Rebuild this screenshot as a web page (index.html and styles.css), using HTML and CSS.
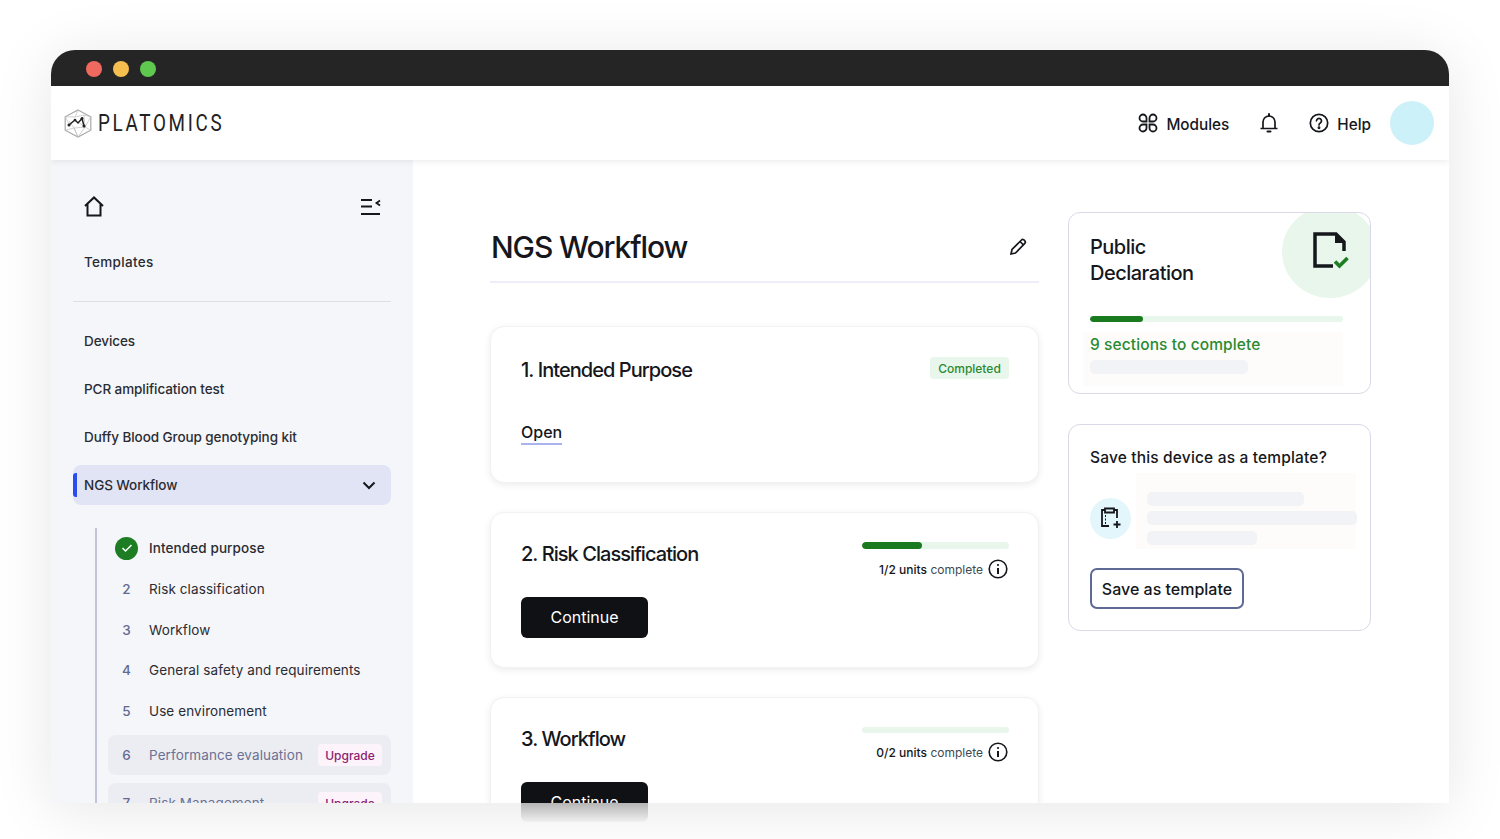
FILE: index.html
```html
<!DOCTYPE html>
<html lang="en">
<head>
<meta charset="utf-8">
<title>Platomics – NGS Workflow</title>
<link rel="stylesheet" href="styles.css">
</head>
<body>
<div class="window">
  <div class="titlebar"><i class="dot dot-red"></i><i class="dot dot-yellow"></i><i class="dot dot-green"></i></div>
  <header class="topbar">
    <div class="brand">
      <svg class="logo" width="28" height="29" viewBox="0 0 28 29" fill="none">
        <path d="M14 1 26.800 7.800V21.200L14 28 1.200 21.200V7.800Z" stroke="#a9a9a9" stroke-width="1.200"/>
        <path d="M14 1 11 8 1.200 7.800M11 8 20 6 26.800 7.800M20 6 21 18 26.800 21.200M21 18 14 28 10 19 1.200 21.200M10 19 21 18M5 12 10 19 14 28M14 13 21 18M26.800 7.800 21 18M1.200 7.800 5 15" stroke="#bdbdbd" stroke-width=".7"/>
        <path d="M5 16 11 11 14 14 18 9.500 20 17" stroke="#222" stroke-width="1.500"/>
        <circle cx="5" cy="16" r="1.500" fill="#222"/><circle cx="11" cy="11" r="1.300" fill="#222"/><circle cx="18" cy="9.500" r="1.500" fill="#222"/><circle cx="20" cy="17" r="1.500" fill="#222"/>
      </svg>
      <span class="brand-name">PLATOMICS</span>
    </div>
    <nav class="topnav">
      <a class="topnav-item">
        <svg width="20" height="20" viewBox="0 0 20 20" fill="none" stroke="#15171c" stroke-width="1.800"><path d="M8.500 8.500H5A3.500 3.500 0 1 1 8.500 5Z"/><path d="M11.500 8.500H15A3.500 3.500 0 1 0 11.500 5Z"/><path d="M8.500 11.500H5A3.500 3.500 0 1 0 8.500 15Z"/><path d="M11.500 11.500H15A3.500 3.500 0 1 1 11.500 15Z"/></svg>
        <span>Modules</span>
      </a>
      <svg class="bell" width="18" height="20" viewBox="0 0 18 20" fill="none" stroke="#15171c" stroke-width="1.700"><path d="M.5 15.500H17.500M3 15.500V9a6 6 0 0 1 12 0V15.500"/><path d="M9 3V1M7.500 18.500H10.500" stroke-linecap="round" stroke-width="2"/></svg>
      <a class="topnav-item help">
        <svg width="20" height="20" viewBox="0 0 20 20" fill="none" stroke="#15171c" stroke-width="1.700"><circle cx="10" cy="10" r="8.700"/><path d="M7.500 7.800A2.500 2.500 0 1 1 11.300 10C10.400 10.500 10 11 10 12" stroke-linecap="round"/><circle cx="10" cy="14.800" r=".6" fill="#15171c"/></svg>
        <span>Help</span>
      </a>
      <div class="avatar"></div>
    </nav>
  </header>
  <div class="body">
    <aside class="sidebar">
      <div class="side-top">
        <svg width="20" height="21" viewBox="0 0 20 21" fill="none" stroke="#15171c" stroke-width="2"><path d="M1 10 10 1.500 19 10M3.500 8V19.500H16.500V8"/></svg>
        <svg class="collapse" width="20" height="19" viewBox="0 0 20 19" fill="none" stroke="#15171c" stroke-width="1.800"><path d="M0 2H11M0 8.500H11M0 16H19M19 2.500 15.500 5 19 7.500"/></svg>
      </div>
      <a class="side-link side-templates">Templates</a>
      <hr class="side-rule">
      <a class="side-link side-devices">Devices</a>
      <a class="side-link">PCR amplification test</a>
      <a class="side-link">Duffy Blood Group genotyping kit</a>
      <a class="side-link side-active">
        <span>NGS Workflow</span>
        <svg width="14" height="9" viewBox="0 0 14 9" fill="none" stroke="#15171c" stroke-width="2"><path d="M1.500 1.500 7 7l5.500-5.500"/></svg>
      </a>
      <div class="tree">
        <div class="step">
          <span class="step-num step-done"><svg width="12" height="10" viewBox="0 0 12 10" fill="none" stroke="#fff" stroke-width="1.500"><path d="M1.500 5 4.500 8l6-6"/></svg></span>
          <span class="step-name step-current">Intended purpose</span>
        </div>
        <div class="step"><span class="step-num">2</span><span class="step-name">Risk classification</span></div>
        <div class="step"><span class="step-num">3</span><span class="step-name">Workflow</span></div>
        <div class="step"><span class="step-num">4</span><span class="step-name">General safety and requirements</span></div>
        <div class="step"><span class="step-num">5</span><span class="step-name">Use environement</span></div>
        <div class="step step-locked"><span class="step-num">6</span><span class="step-name">Performance evaluation</span><span class="upgrade">Upgrade</span></div>
        <div class="step step-locked"><span class="step-num">7</span><span class="step-name">Risk Management</span><span class="upgrade">Upgrade</span></div>
      </div>
    </aside>
    <main class="main">
      <section class="content">
        <div class="page-head">
          <h1>NGS Workflow</h1>
          <svg width="18" height="18" viewBox="0 0 18 18" fill="none" stroke="#15171c" stroke-width="1.700"><path d="M2 16 3 11.500 12.500 2a1.800 1.800 0 0 1 2.800 0.300l.5.500a1.800 1.800 0 0 1 0 2.500L6.500 15Z"/><path d="M11 3.500 14.500 7"/></svg>
        </div>
        <article class="card card-one">
          <div class="card-head">
            <h2 class="card-title-one">1. Intended Purpose</h2>
            <span class="badge">Completed</span>
          </div>
          <a class="open-link">Open</a>
        </article>
        <article class="card card-two">
          <div class="card-head">
            <h2>2. Risk Classification</h2>
            <div class="units">
              <div class="bar bar-unit"><div class="bar-fill" style="width:41%"></div></div>
              <div class="units-row">
                <span class="units-text"><b>1/2 units</b> complete</span>
                <svg width="20" height="20" viewBox="0 0 20 20" fill="none" stroke="#15171c" stroke-width="1.600"><circle cx="10" cy="10" r="8.800"/><path d="M10 9V15" stroke-width="2"/><circle cx="10" cy="6" r="1.100" fill="#15171c" stroke="none"/></svg>
              </div>
            </div>
          </div>
          <a class="btn-dark btn-two">Continue</a>
        </article>
        <article class="card card-three">
          <div class="card-head">
            <h2>3. Workflow</h2>
            <div class="units">
              <div class="bar bar-unit bar-thin"></div>
              <div class="units-row units-row-three">
                <span class="units-text"><b>0/2 units</b> complete</span>
                <svg width="20" height="20" viewBox="0 0 20 20" fill="none" stroke="#15171c" stroke-width="1.600"><circle cx="10" cy="10" r="8.800"/><path d="M10 9V15" stroke-width="2"/><circle cx="10" cy="6" r="1.100" fill="#15171c" stroke="none"/></svg>
              </div>
            </div>
          </div>
          <a class="btn-dark btn-three">Continue</a>
        </article>
      </section>
      <aside class="rail">
        <section class="panel panel-public">
          <div class="blob"></div>
          <svg class="doc-icon" width="36" height="37" viewBox="0 0 36 37" fill="none">
            <path d="M31 19V10L23 2H2V34H20" stroke="#15171c" stroke-width="3.500"/>
            <path d="M22 2V11H31Z" fill="#15171c"/>
            <path d="M22 29.500 26.500 34 34.500 26" stroke="#1d7d23" stroke-width="3.600"/>
          </svg>
          <div class="faint faint-public"></div>
          <h3 class="panel-title">Public<br>Declaration</h3>
          <div class="bar bar-public"><div class="bar-fill" style="width:21%"></div></div>
          <p class="sections">9 sections to complete</p>
          <div class="skel skel-public"></div>
        </section>
        <section class="panel panel-save">
          <div class="faint faint-save"></div>
          <h4>Save this device as a template?</h4>
          <div class="save-row">
            <span class="save-icon">
              <svg width="22" height="24" viewBox="0 0 22 24" fill="none" stroke="#15171c" stroke-width="1.800"><path d="M9 20H2V4H5M14 4H17V12"/><path d="M5 2.500H14V6.500H5Z"/><path d="M5 10H6M5 13.500H6M5 17H6M17 15V22M13.500 18.500H20.500"/></svg>
            </span>
            <div class="skel-stack">
              <div class="skel skel-a"></div>
              <div class="skel skel-b"></div>
              <div class="skel skel-c"></div>
            </div>
          </div>
          <a class="btn-outline">Save as template</a>
        </section>
      </aside>
    </main>
  </div>
</div>
<div class="below">
  <div class="ghost-btn"></div>
</div>
</body>
</html>
```

FILE: styles.css
```css
* { box-sizing: border-box; }
html, body { margin: 0; height: 839px; overflow: hidden; background: #fff; }
body { padding: 50px 51px 0; font-family: "Inter", "Liberation Sans", sans-serif; color: #15171c; }
h1, h2, h3, h4, p { margin: 0; }

.window { height: 753px; display: flex; flex-direction: column; border-radius: 24px 24px 0 0; overflow: hidden; background: #fff; box-shadow: 0 6px 60px rgba(0,0,0,.1); }
.titlebar { flex: none; height: 36px; background: #252525; display: flex; align-items: center; gap: 11px; padding: 1px 0 0 35px; }
.dot { width: 16px; height: 16px; border-radius: 50%; }
.dot-red { background: #f0695f; }
.dot-yellow { background: #f6be4f; }
.dot-green { background: #5ec84f; }

.topbar { flex: none; height: 74px; display: flex; align-items: center; justify-content: space-between; padding: 0 15px 0 13px; background: #fff; box-shadow: 0 2px 6px rgba(0,0,0,.07); position: relative; z-index: 2; }
.brand { display: flex; align-items: center; gap: 6px; }
.brand-name { display: inline-block; font-family: "Roboto", sans-serif; font-weight: 400; font-size: 24px; letter-spacing: 3.400px; color: #222; transform: scaleX(.785); transform-origin: left center; }
.topnav { display: flex; align-items: center; }
.topnav-item { display: flex; align-items: center; gap: 8px; font-size: 15.300px; font-weight: 500; }
.topnav-item span { padding-top: 2px; }
.bell { margin: 0 31px; }
.avatar { width: 44px; height: 44px; border-radius: 50%; background: #cdf1f8; margin-left: 19px; }

.body { flex: 1; display: flex; min-height: 0; }
.sidebar { flex: none; width: 362px; padding: 36px 22px 0; background: #f5f6f9; overflow: hidden; }
.side-top { display: flex; justify-content: space-between; align-items: flex-start; padding: 0 10px 0 11px; height: 21px; }
.collapse { margin-top: 2px; }
.side-link { display: flex; align-items: center; height: 40px; padding-left: 11px; font-size: 13.500px; letter-spacing: -.08px; font-weight: 500; margin-top: 8px; color: #2a2c33; }
.side-templates { margin-top: 25px; letter-spacing: .3px; }
.side-rule { border: 0; height: 1px; background: #dfe0e6; margin: 19px 0 0; }
.side-devices { margin-top: 19px; }
.side-active { justify-content: space-between; padding-right: 15px; background: #e0e4f5; border-radius: 8px; position: relative; }
.side-active::before { content: ""; position: absolute; left: 0; top: 8px; width: 4px; height: 24px; background: #2a4df0; border-radius: 3px 0 0 3px; }
.tree { margin: 23px 0 0 22px; padding-left: 11px; border-left: 2px solid #c2c5da; height: 400px; }
.step { display: flex; align-items: center; height: 40.670px; padding-left: 7px; font-size: 13.500px; letter-spacing: .1px; color: #2a2c33; }
.step-num { flex: none; width: 23px; height: 23px; display: flex; align-items: center; justify-content: center; margin-right: 11px; color: #626a92; font-weight: 500; }
.step-done { background: #1d7d23; border-radius: 50%; }
.step-name { flex: 1; white-space: nowrap; }
.step-current { font-weight: 500; }
.step-locked { height: 40px; background: #ecedf2; border-radius: 8px; color: #6b7194; margin-top: 4px; padding-right: 9px; }
.step-locked + .step-locked { margin-top: 8px; }
.upgrade { flex: none; width: 64px; height: 22px; display: flex; align-items: center; justify-content: center; font-size: 12px; letter-spacing: 0; font-weight: 500; color: #8a2272; background: #fdf3fb; border-radius: 4px; }

.main { flex: 1; display: flex; gap: 29px; padding: 52px 0 0 77px; background: #fff; overflow: hidden; }
.content { flex: none; width: 549px; }
.page-head { display: flex; justify-content: space-between; align-items: center; height: 71px; padding: 0 12px 0 1px; margin-bottom: 43px; border-bottom: 2px solid #eeeef8; }
.page-head h1 { font-size: 30px; font-weight: 500; letter-spacing: -1.100px; }
.card { border: 1px solid #f1f1f6; border-radius: 14px; background: #fff; box-shadow: 0 2px 7px rgba(0,0,0,.08); padding: 29px 29px 0 30px; margin-bottom: 29px; }
.card-one { height: 157px; padding-top: 30px; }
.card-two { height: 156px; }
.card-three { height: 160px; }
.card-head { display: flex; justify-content: space-between; align-items: flex-start; }
.card-head h2 { font-size: 20px; line-height: 24px; font-weight: 500; letter-spacing: -.95px; }
.card-title-one { margin-top: 1px; }
.badge { width: 79px; height: 22px; display: flex; align-items: center; justify-content: center; background: #e9f6ec; color: #2a8a30; font-size: 12px; font-weight: 500; border-radius: 4px; }
.open-link { display: inline-block; margin-top: 40px; font-size: 16px; line-height: 21px; font-weight: 500; border-bottom: 2px solid #a9b3ee; }
.units { width: 147px; }
.bar { background: #e9f6ec; border-radius: 4px; overflow: hidden; }
.bar-unit { height: 7px; }
.bar-thin { height: 6px; }
.bar-fill { height: 100%; background: #1a7a1f; border-radius: 4px; }
.units-row { display: flex; justify-content: flex-end; align-items: center; gap: 5px; height: 20px; margin-top: 10px; padding-right: 1px; }
.units-row-three { margin-top: 9px; }
.units-text { font-size: 12px; color: #3c4a52; white-space: nowrap; }
.units-text b { font-weight: 500; color: #15171c; }
.btn-dark { display: flex; align-items: center; justify-content: center; width: 127px; height: 41px; padding-bottom: 1px; background: #101114; color: #fff; font-size: 16px; border-radius: 6px; }
.btn-two { margin-top: 18px; }
.btn-three { margin-top: 20px; }

.rail { flex: none; width: 303px; }
.panel { border: 1px solid #d9d9e8; border-radius: 12px; background: #fff; padding: 0 21px; position: relative; overflow: hidden; }
.panel-public { height: 182px; padding-top: 21px; margin-bottom: 30px; }
.panel-save { height: 207px; padding-top: 22px; }
.blob { position: absolute; left: 213px; top: -7px; width: 96px; height: 92px; border-radius: 50%; background: #e9f6ec; }
.doc-icon { position: absolute; left: 244px; top: 19px; }
.faint { position: absolute; background: #fdfcfb; }
.faint-public { left: 14px; top: 119px; width: 260px; height: 54px; }
.faint-save { left: 67px; top: 48px; width: 220px; height: 76px; }
.panel-title { position: relative; font-size: 20px; line-height: 26px; font-weight: 500; letter-spacing: -.5px; }
.bar-public { position: relative; height: 6px; width: 253px; margin-top: 30px; }
.sections { position: relative; margin-top: 12px; font-size: 15.500px; line-height: 22px; font-weight: 500; letter-spacing: .1px; color: #2a8a30; }
.skel { height: 14px; border-radius: 5px; background: #f2f3f6; }
.skel-public { position: relative; width: 158px; margin-top: 4px; }
.panel-save h4 { position: relative; font-size: 15.500px; line-height: 22px; font-weight: 500; letter-spacing: .17px; }
.save-row { position: relative; display: flex; align-items: center; gap: 16px; height: 78px; margin-top: 10px; }
.save-icon { flex: none; width: 41px; height: 41px; border-radius: 50%; background: #e3f6fb; display: flex; align-items: center; justify-content: center; }
.skel-stack { flex: none; width: 210px; display: flex; flex-direction: column; gap: 5.500px; }
.skel-a { width: 157px; }
.skel-b { width: 210px; }
.skel-c { width: 110px; }
.btn-outline { display: flex; align-items: center; justify-content: center; width: 154px; height: 41px; margin-top: 11px; border: 2px solid #5f6a94; border-radius: 7px; font-size: 16px; font-weight: 500; }

.below { height: 36px; position: relative; }
.ghost-btn { width: 127px; height: 19px; margin-left: 470px; border-radius: 0 0 6px 6px; background: linear-gradient(#b5b5b6, #f0f0f0); }
```
